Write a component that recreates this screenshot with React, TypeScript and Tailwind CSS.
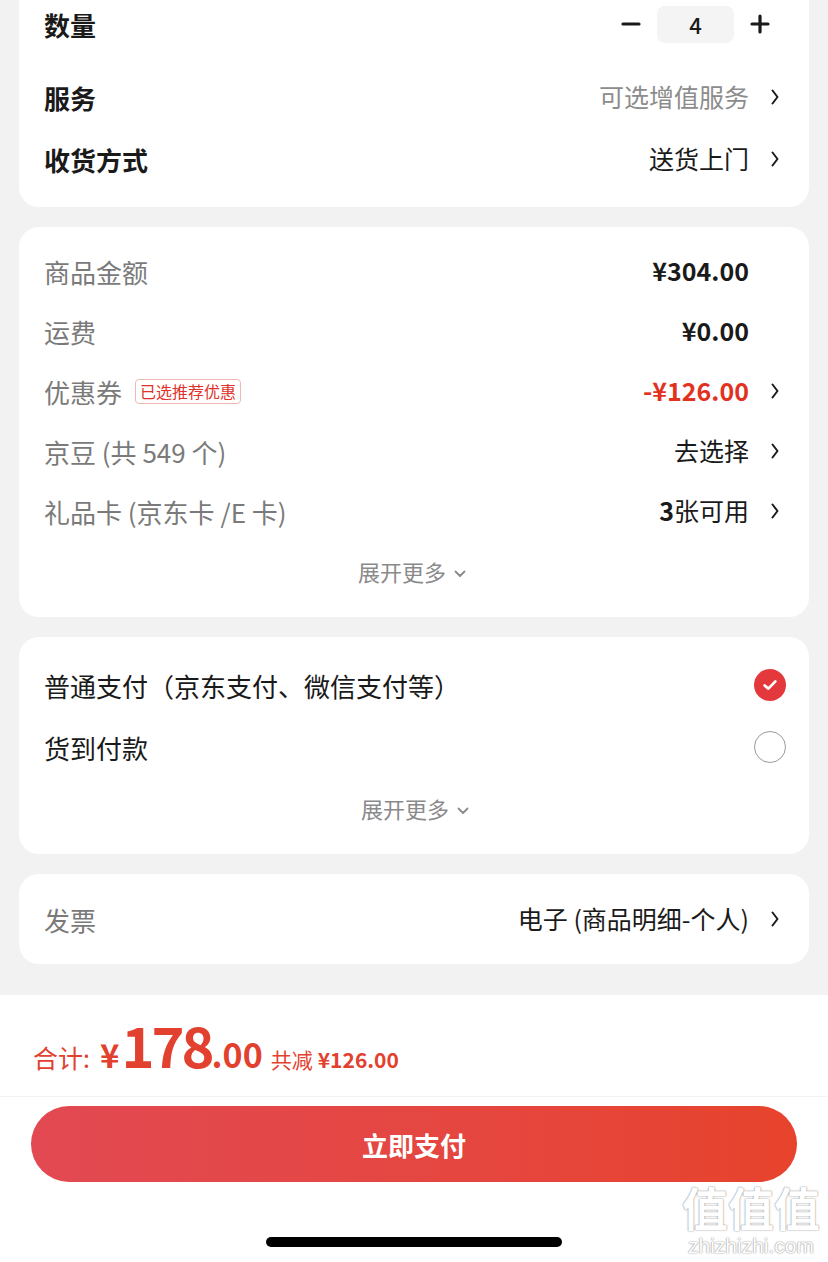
import { ReactNode } from 'react'

const font = "font-['Noto_Sans_CJK_SC','Noto_Sans',sans-serif]"

function Chevron({ hidden = false }: { hidden?: boolean }) {
  return (
    <svg
      viewBox="0 0 10 20"
      className={`w-[10px] h-[20px] ml-[21px] ${hidden ? 'invisible' : ''}`}
      fill="none"
      stroke="#1a1a1a"
      strokeWidth="2"
      strokeLinecap="round"
      strokeLinejoin="round"
    >
      <path d="M2.5 3.5 L7.5 10 L2.5 16.5" />
    </svg>
  )
}

function Row({ label, right, h, labelClass, chevron = true, hideChevron = false }: {
  label: ReactNode
  right: ReactNode
  h: string
  labelClass: string
  chevron?: boolean
  hideChevron?: boolean
}) {
  return (
    <div className={`flex items-center justify-between ${h}`}>
      <div className={`flex items-center text-[26px] ${labelClass}`}>{label}</div>
      <div className="flex items-center">
        {right}
        {chevron && <Chevron hidden={hideChevron} />}
      </div>
    </div>
  )
}

function Expand() {
  return (
    <div className="flex items-center justify-center h-[61px] text-[22px] text-[#8a8a8a]">
      展开更多
      <svg viewBox="0 0 12 8" className="w-[12px] h-[8px] ml-[8px] mt-[4px]" fill="none" stroke="#8a8a8a" strokeWidth="1.8" strokeLinecap="round" strokeLinejoin="round">
        <path d="M1.5 1.5 L6 6 L10.5 1.5" />
      </svg>
    </div>
  )
}

export default function App() {
  return (
    <div className={`${font} relative w-[828px] h-[1262px] bg-[#f2f2f2] overflow-hidden text-[#1a1a1a]`}>
      <div className="px-[19px] flex flex-col gap-[20px]">
        {/* order options */}
        <div className="bg-white rounded-b-[20px] pl-[25px] pr-[29px] pb-[17px]">
          <div className="flex items-center justify-between h-[48px]">
            <div className="text-[26px] font-bold">数量</div>
            <div className="flex items-center mr-[10px]">
              <svg viewBox="0 0 20 20" className="w-[20px] h-[20px]" stroke="#1a1a1a" strokeWidth="3.2" strokeLinecap="round">
                <path d="M2 10 H18" />
              </svg>
              <div className="w-[77px] h-[37px] mx-[16px] rounded-[8px] bg-[#f4f4f4] flex items-center justify-center text-[22px] font-medium">4</div>
              <svg viewBox="0 0 20 20" className="w-[20px] h-[20px]" stroke="#1a1a1a" strokeWidth="3.2" strokeLinecap="round">
                <path d="M2 10 H18 M10 2 V18" />
              </svg>
            </div>
          </div>
          <div className="mt-[18px]">
            <Row h="h-[62px]" labelClass="font-bold" label="服务" right={<span className="text-[25px] text-[#8c8c8c]">可选增值服务</span>} />
            <Row h="h-[62px]" labelClass="font-bold" label="收货方式" right={<span className="text-[25px]">送货上门</span>} />
          </div>
        </div>

        {/* amounts */}
        <div className="bg-white rounded-[20px] pl-[25px] pr-[29px] pt-[14px] pb-[15px]">
          <Row h="h-[60px]" labelClass="text-[#7a7a7a]" label="商品金额" hideChevron right={<span className="text-[25px] font-semibold">¥304.00</span>} />
          <Row h="h-[60px]" labelClass="text-[#7a7a7a]" label="运费" hideChevron right={<span className="text-[25px] font-semibold">¥0.00</span>} />
          <Row
            h="h-[60px]"
            labelClass="text-[#7a7a7a]"
            label={
              <>
                优惠券
                <span className="ml-[13px] px-[4px] h-[25px] flex items-center text-[16px] leading-none text-[#e0322a] border border-[#f0b8b2] rounded-[4px]">已选推荐优惠</span>
              </>
            }
            right={<span className="text-[25px] font-semibold text-[#e2321f]">-¥126.00</span>}
          />
          <Row h="h-[60px]" labelClass="text-[#7a7a7a]" label="京豆 (共 549 个)" right={<span className="text-[25px]">去选择</span>} />
          <Row
            h="h-[60px]"
            labelClass="text-[#7a7a7a]"
            label="礼品卡 (京东卡 /E 卡)"
            right={<span className="text-[25px]"><span className="font-bold">3</span>张可用</span>}
          />
          <Expand />
        </div>

        {/* payment */}
        <div className="bg-white rounded-[20px] pl-[25px] pr-[23px] pt-[17px] pb-[15px]">
          <div className="flex items-center justify-between h-[62px]">
            <span className="text-[26px]">普通支付（京东支付、微信支付等）</span>
            <div className="w-[32px] h-[32px] rounded-full bg-[#e4393c] flex items-center justify-center">
              <svg viewBox="0 0 20 20" className="w-[18px] h-[18px]" fill="none" stroke="white" strokeWidth="3" strokeLinecap="round" strokeLinejoin="round">
                <path d="M4 10.5 L8.2 14 L16 6" />
              </svg>
            </div>
          </div>
          <div className="flex items-center justify-between h-[62px]">
            <span className="text-[26px]">货到付款</span>
            <div className="w-[32px] h-[32px] rounded-full border-[1.5px] border-[#9a9a9a]" />
          </div>
          <Expand />
        </div>

        {/* invoice */}
        <div className="bg-white rounded-[20px] pl-[25px] pr-[29px]">
          <Row h="h-[90px]" labelClass="text-[#7a7a7a]" label="发票" right={<span className="text-[25px]">电子 (商品明细-个人)</span>} />
        </div>
      </div>

      {/* bottom bar */}
      <div className="absolute left-0 right-0 bottom-0 h-[267px] bg-white flex flex-col">
        <div className="h-[102px] flex items-center pl-[33px] pt-[4px] text-[#e2412f] border-b border-[#f3f3f3]">
          <div className="flex items-baseline">
            <span className="text-[25px]">合计:</span>
            <span className="text-[33px] font-bold ml-[10px]">¥</span>
            <span className="text-[56px] font-bold leading-none tracking-[-3px] ml-[2px]">178</span>
            <span className="text-[34px] font-bold">.00</span>
            <span className="text-[21px] ml-[8px]">共减</span>
            <span className="text-[21px] font-semibold ml-[5px]">¥126.00</span>
          </div>
        </div>
        <div className="px-[31px] pt-[9px]">
          <div className="h-[76px] rounded-full bg-gradient-to-r from-[#e24952] to-[#e7432c] flex items-center justify-center text-white text-[26px] font-bold">
            立即支付
          </div>
        </div>
        <div className="flex-1 flex items-end justify-center pb-[15px]">
          <div className="w-[296px] h-[10px] rounded-full bg-black" />
        </div>
      </div>

      {/* watermark */}
      <div className="absolute right-[8px] bottom-[6px] flex flex-col items-center gap-[6px] text-white pointer-events-none [text-shadow:0_0_1px_#888,0_0_2px_#aaa]">
        <span className="text-[46px] leading-none font-bold">值值值</span>
        <span className="text-[21px] leading-none font-['Liberation_Sans',sans-serif]">zhizhizhi.com</span>
      </div>
    </div>
  )
}
